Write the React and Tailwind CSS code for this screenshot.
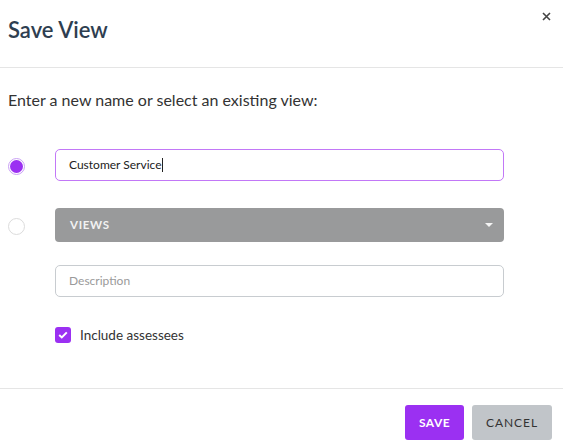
import React from "react";

export default function App() {
  return (
    <div className="w-[563px] h-[446px] bg-white flex flex-col" style={{ fontFamily: "Lato, 'Open Sans', sans-serif" }}>
      <div className="relative h-[68px] flex items-center pl-[8px] border-b border-[#e5e5e5]">
        <h1 className="text-[22px] font-semibold text-[#2e3e50] leading-none mt-[-8px]">Save View</h1>
        <svg className="absolute left-[542px] top-[12px]" width="9" height="9" viewBox="0 0 9 9">
          <path d="M1 1L8 8M8 1L1 8" stroke="#444" strokeWidth="1.6" />
        </svg>
      </div>
      <div className="flex-1 flex flex-col border-b border-[#e5e5e5]">
        <p className="mt-[21px] ml-[8px] text-[16px] text-[#333] leading-[22px]">Enter a new name or select an existing view:</p>
        <div className="mt-[38px] flex items-center">
          <div className="w-[55px] flex pl-[8px] pt-[2px]">
            <div className="w-[17px] h-[17px] rounded-full border border-[#c9a0f5] flex items-center justify-center">
              <div className="w-[13px] h-[13px] rounded-full bg-[#9b30f2]" />
            </div>
          </div>
          <div className="w-[449px] h-[32px] rounded-[5px] border border-[#c278f7] flex items-center pl-[13px] text-[12px] text-[#222]">
            Customer Service<span className="w-px h-[14px] bg-[#222]" />
          </div>
        </div>
        <div className="mt-[27px] flex items-center">
          <div className="w-[55px] flex pl-[8px] pt-[2px]">
            <div className="w-[17px] h-[17px] rounded-full border border-[#dcdcdc]" />
          </div>
          <div className="w-[449px] h-[34px] rounded-[4px] bg-[#999a9b] flex items-center justify-between pl-[15px] pr-[11px]">
            <span className="text-[11.5px] font-bold text-[#f2f2f2] tracking-[0.06em]">VIEWS</span>
            <svg width="8" height="5" viewBox="0 0 8 5"><path d="M0 0H8L4 4Z" fill="#f4f4f4" /></svg>
          </div>
        </div>
        <div className="mt-[23px] ml-[55px] w-[449px] h-[32px] rounded-[5px] border border-[#c8ccd0] flex items-center pl-[13px] text-[12px] text-[#9a9a9a]">
          Description
        </div>
        <div className="mt-[28px] ml-[55px] flex items-center">
          <div className="w-[16px] h-[16px] rounded-[3px] bg-[#9b30f2] flex items-center justify-center">
            <svg width="10" height="8" viewBox="0 0 10 8"><path d="M1.2 4L3.8 6.4L8.8 1.4" stroke="white" strokeWidth="2" fill="none" /></svg>
          </div>
          <span className="ml-[9px] text-[13.5px] text-[#333]">Include assessees</span>
        </div>
      </div>
      <div className="h-[57px] flex items-start justify-end pr-[11px] pt-[16px] gap-[8px]">
        <button className="w-[59px] h-[35px] rounded-[3px] bg-[#9b30f2] text-white text-[12px] font-bold tracking-[0.04em]">SAVE</button>
        <button className="w-[80px] h-[35px] rounded-[3px] bg-[#c1c5c9] text-[#333] text-[12px] tracking-[0.08em]">CANCEL</button>
      </div>
    </div>
  );
}
